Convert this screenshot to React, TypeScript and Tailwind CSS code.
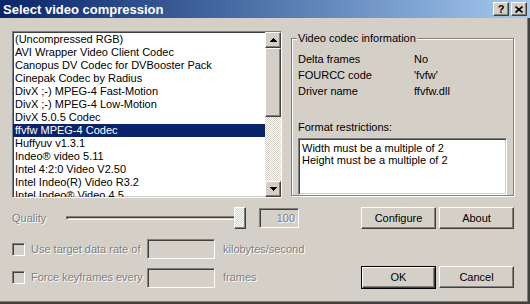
import React from 'react';

const sunken =
  'border border-t-[#808080] border-l-[#808080] border-b-white border-r-white shadow-[inset_1px_1px_0_#404040,inset_-1px_-1px_0_#d4d0c8]';
const raised =
  'border border-t-white border-l-white border-b-[#404040] border-r-[#404040] shadow-[inset_-1px_-1px_0_#808080]';
const dither = 'bg-[repeating-conic-gradient(#ffffff_0_25%,#d4d0c8_0_50%)] bg-[length:2px_2px]';
const disabled = 'text-[#808080] [text-shadow:1px_1px_0_#ffffff]';

const codecs = [
  '(Uncompressed RGB)',
  'AVI Wrapper Video Client Codec',
  'Canopus DV Codec for DVBooster Pack',
  'Cinepak Codec by Radius',
  'DivX ;-) MPEG-4 Fast-Motion',
  'DivX ;-) MPEG-4 Low-Motion',
  'DivX 5.0.5 Codec',
  'ffvfw MPEG-4 Codec',
  'Huffyuv v1.3.1',
  'Indeo® video 5.11',
  'Intel 4:2:0 Video V2.50',
  'Intel Indeo(R) Video R3.2',
  'Intel Indeo® Video 4.5',
];

const info = [
  ['Delta frames', 'No'],
  ['FOURCC code', "'fvfw'"],
  ['Driver name', 'ffvfw.dll'],
];

const Arrow = ({ down }: { down?: boolean }) => (
  <svg width="7" height="4" viewBox="0 0 7 4" className="block">
    <path d={down ? 'M0 0h7L3.5 4z' : 'M3.5 0L7 4H0z'} fill="#000" shapeRendering="crispEdges" />
  </svg>
);

const Button = ({ label, isDefault }: { label: string; isDefault?: boolean }) =>
  isDefault ? (
    <div className="w-[75px] h-[23px] border border-black">
      <div className={`w-full h-full ${raised} flex items-center justify-center`}>{label}</div>
    </div>
  ) : (
    <div className={`w-[75px] h-[22px] ${raised} flex items-center justify-center`}>{label}</div>
  );

const CheckRow = ({ label, unit, labelW }: { label: string; unit: string; labelW: string }) => (
  <>
    <div className={`ml-[12px] w-[13px] h-[13px] ${sunken} bg-[#d4d0c8]`} />
    <span className={`ml-[6px] ${labelW} ${disabled}`}>{label}</span>
    <div className={`w-[68px] h-[20px] ${sunken} bg-[#d4d0c8]`} />
    <span className={`ml-[8px] ${disabled}`}>{unit}</span>
  </>
);

export default function App() {
  return (
    <div className="w-[530px] h-[304px] bg-[#d4d0c8] flex flex-col overflow-hidden font-['Liberation_Sans',Arial,sans-serif] text-[11px] text-black leading-none">
      {/* title bar */}
      <div className="h-[18px] flex items-center bg-gradient-to-r from-[#0a246a] to-[#a6caf0] pl-[3px] pr-[3px]">
        <span className="text-white font-bold text-[13px]">Select video compression</span>
        <div className={`ml-auto w-[16px] h-[14px] ${raised} bg-[#d4d0c8] flex items-center justify-center font-bold text-[11px]`}>
          ?
        </div>
        <div className={`ml-[2px] w-[16px] h-[14px] ${raised} bg-[#d4d0c8] flex items-center justify-center`}>
          <svg width="8" height="7" viewBox="0 0 8 7">
            <path d="M0.5 0.5L7.5 6.5M7.5 0.5L0.5 6.5" stroke="#000" strokeWidth="1.6" />
          </svg>
        </div>
      </div>

      <div className="flex-1 flex flex-col border-r-2 border-b-2 border-r-[#404040] border-b-[#404040] shadow-[inset_-1px_-1px_0_#808080]">
        {/* top section */}
        <div className="flex mt-[13px]">
          <div className={`ml-[12px] w-[270px] h-[167px] ${sunken} bg-white flex`}>
            <div className="flex-1 overflow-hidden pt-[1px]">
              {codecs.map((c, i) => (
                <div
                  key={c}
                  className={`h-[13px] leading-[13px] pl-[2px] whitespace-nowrap ${
                    i === 7 ? 'bg-[#0a246a] text-white' : ''
                  }`}
                >
                  {c}
                </div>
              ))}
            </div>
            <div className="w-[16px] flex flex-col">
              <div className={`h-[16px] ${raised} bg-[#d4d0c8] flex items-center justify-center`}>
                <Arrow />
              </div>
              <div className={`h-[69px] ${raised} bg-[#d4d0c8]`} />
              <div className={`flex-1 ${dither}`} />
              <div className={`h-[16px] ${raised} bg-[#d4d0c8] flex items-center justify-center`}>
                <Arrow down />
              </div>
            </div>
          </div>

          <div className="ml-[9px] mt-[7px] w-[223px] h-[158px] border border-[#808080] shadow-[1px_1px_0_#ffffff,inset_1px_1px_0_#ffffff] relative flex flex-col pl-[6px] pt-[13px]">
            <span className="absolute -top-[6px] left-[5px] bg-[#d4d0c8] px-[1px]">Video codec information</span>
            {info.map(([k, v]) => (
              <div key={k} className="flex h-[16px] items-center">
                <span className="w-[116px]">{k}</span>
                <span>{v}</span>
              </div>
            ))}
            <span className="mt-[22px]">Format restrictions:</span>
            <div className={`mt-[5px] w-[209px] h-[58px] ${sunken} bg-white pl-[3px] pt-[3px] leading-[12px]`}>
              <div>Width must be a multiple of 2</div>
              <div>Height must be a multiple of 2</div>
            </div>
          </div>
        </div>

        {/* quality row */}
        <div className="flex items-center h-[22px] mt-[9px]">
          <span className={`ml-[12px] w-[54px] ${disabled}`}>Quality</span>
          <div className="relative w-[180px] h-[22px] flex items-center">
            <div className={`w-full h-[4px] ${sunken}`} />
            <div className={`absolute right-0 top-0 w-[12px] h-[22px] ${raised} ${dither}`} />
          </div>
          <div className={`ml-[13px] w-[40px] h-[20px] ${sunken} bg-[#d4d0c8] flex items-center justify-end pr-[3px] ${disabled}`}>
            100
          </div>
          <div className="ml-auto mr-[14px] flex gap-[3px]">
            <Button label="Configure" />
            <Button label="About" />
          </div>
        </div>

        {/* data rate */}
        <div className="flex items-center h-[20px] mt-[10px]">
          <CheckRow label="Use target data rate of" unit="kilobytes/second" labelW="w-[116px]" />
        </div>

        {/* keyframes + OK/Cancel */}
        <div className="flex items-center h-[23px] mt-[7px]">
          <CheckRow label="Force keyframes every" unit="frames" labelW="w-[116px]" />
          <div className="ml-auto mr-[14px] flex gap-[3px]">
            <Button label="OK" isDefault />
            <Button label="Cancel" />
          </div>
        </div>
      </div>
    </div>
  );
}
